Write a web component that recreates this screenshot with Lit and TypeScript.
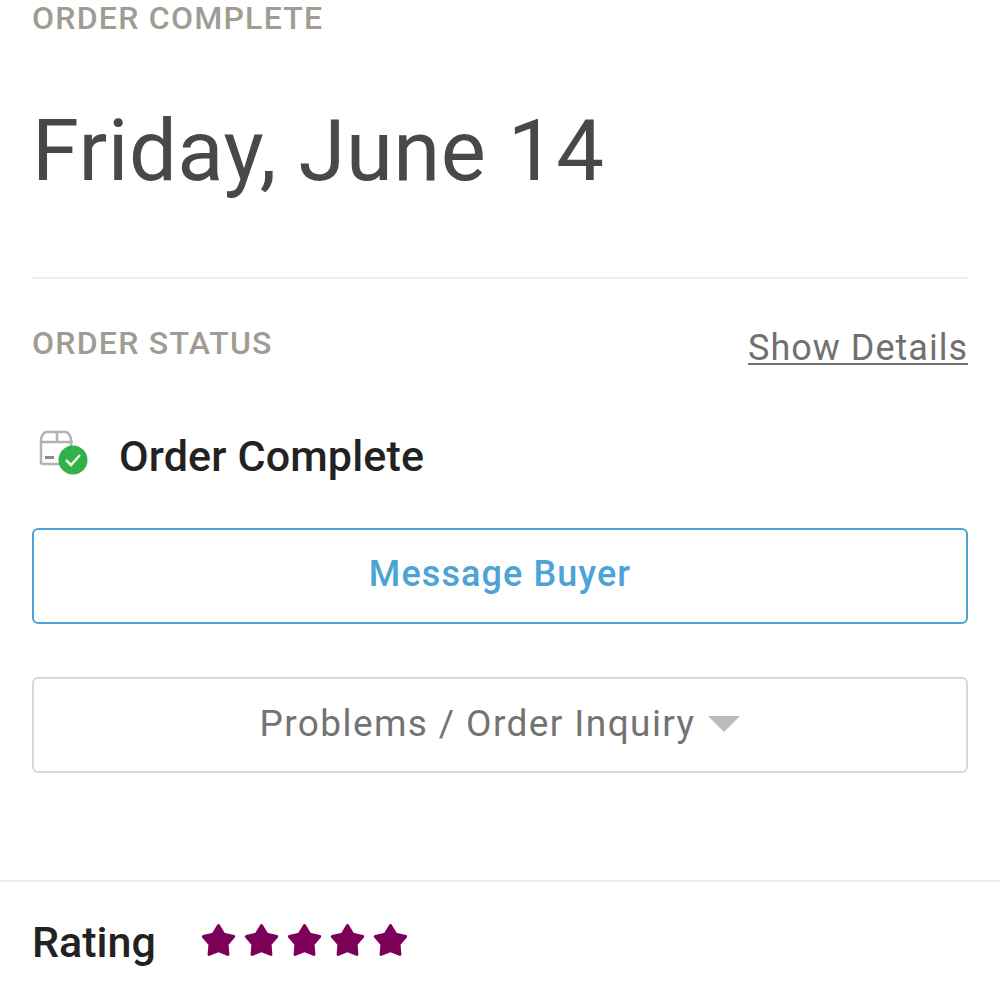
import { LitElement, html, css, svg } from "lit";
import { customElement } from "lit/decorators.js";

const star = svg`<polygon points="17.500,2.500 22.790,11.220 32.700,13.560 26.060,21.280 26.900,31.440 17.500,27.500 8.100,31.440 8.940,21.280 2.300,13.560 12.210,11.220"/>`;

@customElement("app-root")
export class AppRoot extends LitElement {
  static styles = css`
    :host {
      display: block;
      height: 1000px;
      overflow: hidden;
      background: #fff;
      font-family: Roboto, "Liberation Sans", sans-serif;
    }
    .top {
      padding: 0 32px;
    }
    .eyebrow {
      color: #a09c94;
      font-size: 32px;
      font-weight: 500;
      line-height: 36px;
      letter-spacing: 1.25px;
    }
    .date {
      margin-top: 67px;
      color: #484848;
      font-size: 85px;
      font-weight: 400;
      line-height: 96px;
      letter-spacing: 0.5px;
    }
    .rule {
      height: 2px;
      margin-top: 78px;
      background: #efeeea;
    }
    .status-head {
      display: flex;
      justify-content: space-between;
      align-items: flex-start;
      margin-top: 46px;
    }
    .details {
      margin-top: 2px;
      color: #707070;
      font-size: 36px;
      line-height: 42px;
      letter-spacing: 1px;
      text-decoration: underline;
      text-decoration-thickness: 2px;
      text-underline-offset: 3px;
    }
    .status {
      display: flex;
      align-items: center;
      gap: 30px;
      margin-top: 59px;
      color: #222;
      font-size: 43px;
      font-weight: 500;
      line-height: 56px;
      letter-spacing: 0.15px;
    }
    .status svg {
      flex: none;
      margin: 0 0 6px 7px;
    }
    .btn {
      display: flex;
      align-items: center;
      justify-content: center;
      box-sizing: border-box;
      height: 96px;
      padding-bottom: 4px;
      border: 2px solid;
      border-radius: 6px;
      font-size: 36px;
    }
    .primary {
      margin-top: 44px;
      border-color: #4ba3d6;
      color: #4ba3d6;
      font-weight: 500;
      letter-spacing: 1.1px;
    }
    .secondary {
      gap: 13px;
      margin-top: 53px;
      border-color: #d9d7d5;
      color: #737373;
      font-size: 37px;
      letter-spacing: 1.4px;
    }
    .caret {
      width: 0;
      height: 0;
      margin-top: 2px;
      border-left: 16px solid transparent;
      border-right: 16px solid transparent;
      border-top: 16px solid #bdbcb8;
    }
    .rating {
      display: flex;
      align-items: center;
      gap: 45px;
      margin-top: 107px;
      padding: 37px 32px 0;
      border-top: 2px solid #efeeea;
      color: #222;
      font-size: 43px;
      font-weight: 500;
      line-height: 46px;
    }
    .stars {
      display: flex;
      margin-bottom: 2px;
      fill: #7c0058;
      stroke: #7c0058;
      stroke-width: 3;
      stroke-linejoin: round;
    }
  `;

  render() {
    return html`
      <section class="top">
        <div class="eyebrow">ORDER COMPLETE</div>
        <div class="date">Friday, June 14</div>
        <div class="rule"></div>
        <div class="status-head">
          <div class="eyebrow">ORDER STATUS</div>
          <div class="details">Show Details</div>
        </div>
        <div class="status">
          <svg width="50" height="46" viewBox="0 0 50 46">
            <path d="M2 10q0-2 1-4l2-3q1-1 3-1h18q2 0 3 1l2 3q1 2 1 4v22a2 2 0 0 1-2 2H4a2 2 0 0 1-2-2z" fill="#fff" stroke="#b3b3b3" stroke-width="2.500"/>
            <path d="M2 12h32M18 2v10" fill="none" stroke="#b3b3b3" stroke-width="2.500"/>
            <rect x="6" y="26" width="9" height="3" fill="#8c8c8c"/>
            <circle cx="34" cy="30" r="14.500" fill="#32b04a"/>
            <path d="M27 30l5 5 9-10" fill="none" stroke="#e8f7ea" stroke-width="2.600"/>
          </svg>
          <span>Order Complete</span>
        </div>
        <div class="btn primary">Message Buyer</div>
        <div class="btn secondary">Problems / Order Inquiry <span class="caret"></span></div>
      </section>
      <section class="rating">
        <span>Rating</span>
        <svg class="stars" width="206" height="36" viewBox="0 0 206 36">
          ${[0, 43, 86, 129, 172].map((x) => svg`<g transform="translate(${x} 0)">${star}</g>`)}
        </svg>
      </section>
    `;
  }
}
